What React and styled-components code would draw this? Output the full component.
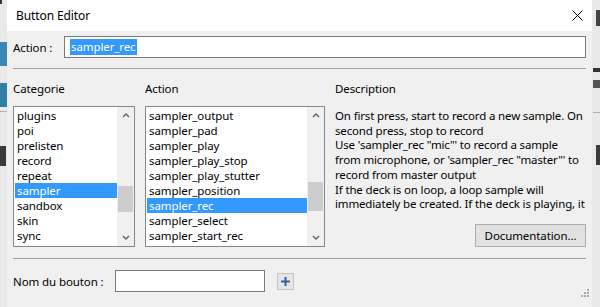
import React from 'react';
import styled, { createGlobalStyle } from 'styled-components';

const GlobalStyle = createGlobalStyle`
  html, body {
    margin: 0;
    padding: 0;
    background: #eaeaea;
  }
  body {
    font-family: "Noto Sans", "Open Sans", sans-serif;
    font-size: 11.5px;
    color: #000;
  }
`;

const Screen = styled.div`
  display: flex;
  width: 600px;
  height: 307px;
  overflow: hidden;
`;

const Strip = styled.div`
  width: ${p => p.$w}px;
  display: flex;
  flex-direction: column;
  align-items: ${p => (p.$right ? 'flex-end' : 'flex-start')};
  background: #e9e9e9;
`;

const Blob = styled.div`
  margin-top: ${p => p.$top}px;
  width: ${p => p.$w}px;
  height: ${p => p.$h}px;
  background: ${p => p.$c};
`;

const Dialog = styled.div`
  position: relative;
  width: 585px;
  display: flex;
  flex-direction: column;
  background: #f0f0f0;
`;

const TitleBar = styled.div`
  height: 31px;
  background: #fff;
  display: flex;
  align-items: center;
  justify-content: space-between;
  padding: 0 9px 0 9px;
  box-sizing: border-box;
`;

const Title = styled.span`
  font-size: 12px;
  letter-spacing: -0.1px;
`;

const Body = styled.div`
  padding: 0 6px;
  display: flex;
  flex-direction: column;
`;

const Row = styled.div`
  display: flex;
  align-items: center;
  margin-top: ${p => p.$top || 0}px;
`;

const Label = styled.span`
  width: ${p => p.$w}px;
  flex-shrink: 0;
  letter-spacing: -0.1px;
`;

const TextInput = styled.div`
  height: 22px;
  box-sizing: border-box;
  border: 1px solid #7a7a7a;
  background: #fff;
  width: ${p => (p.$w ? `${p.$w}px` : 'auto')};
  flex: ${p => (p.$w ? 'none' : '1')};
  display: flex;
  align-items: center;
  padding-left: 5px;
  letter-spacing: -0.1px;
`;

const Selected = styled.span`
  background: #3399ff;
  color: #fff;
  line-height: 16px;
  padding: 0 1px;
`;

const Separator = styled.div`
  height: 1px;
  background: #a0a0a0;
  margin-top: ${p => p.$top}px;
`;

const Columns = styled.div`
  display: grid;
  grid-template-columns: 122px 180px minmax(0, 1fr);
  column-gap: 10px;
  margin-top: 12px;
`;

const ColLabel = styled.div`
  line-height: 15px;
  height: 15px;
  margin-bottom: 10px;
  letter-spacing: -0.1px;
`;

const ListBox = styled.div`
  height: 141px;
  box-sizing: border-box;
  border: 1px solid #828790;
  background: #fff;
  display: flex;
`;

const Items = styled.div`
  flex: 1;
  padding: 1px 0 0 1px;
  overflow: hidden;
`;

const Item = styled.div`
  height: 15px;
  line-height: 15px;
  padding-left: 2px;
  white-space: nowrap;
  letter-spacing: -0.1px;
  background: ${p => (p.$active ? '#3399ff' : 'transparent')};
  color: ${p => (p.$active ? '#fff' : '#000')};
`;

const ScrollBar = styled.div`
  width: 17px;
  background: #f0f0f0;
  display: flex;
  flex-direction: column;
`;

const Arrow = styled.div`
  height: 17px;
  display: flex;
  align-items: center;
  justify-content: center;
`;

const Track = styled.div`
  flex: 1;
`;

const Thumb = styled.div`
  margin: ${p => p.$top}px 1px 0 1px;
  height: ${p => p.$h}px;
  background: #cdcdcd;
`;

const Description = styled.div`
  height: 141px;
  display: flex;
  flex-direction: column;
`;

const DescText = styled.div`
  margin-top: 3px;
  line-height: 14.7px;
  letter-spacing: -0.15px;
`;

const Line = styled.div`
  white-space: nowrap;
`;

const DocButton = styled.button`
  margin-top: auto;
  align-self: flex-end;
  width: 111px;
  height: 23px;
  border: 1px solid #adadad;
  background: #e1e1e1;
  font-family: inherit;
  font-size: 11.5px;
  letter-spacing: -0.1px;
  color: #000;
  padding: 0;
`;

const PlusButton = styled.div`
  width: 17px;
  height: 17px;
  box-sizing: border-box;
  margin-left: 12px;
  border: 1px solid #c4c4c4;
  background: #e5e5e5;
  display: flex;
  align-items: center;
  justify-content: center;
`;

const Grip = styled.svg`
  position: absolute;
  right: 3px;
  bottom: 10px;
`;

const Chevron = ({ down }) => (
  <svg width="8" height="5" viewBox="0 0 8 5">
    <polyline
      points={down ? '1,1 4,4 7,1' : '1,4 4,1 7,4'}
      fill="none"
      stroke="#606060"
      strokeWidth="1.4"
    />
  </svg>
);

const List = ({ items, active, thumbTop, thumbH }) => (
  <ListBox>
    <Items>
      {items.map(name => (
        <Item key={name} $active={name === active}>{name}</Item>
      ))}
    </Items>
    <ScrollBar>
      <Arrow><Chevron /></Arrow>
      <Track>
        <Thumb $top={thumbTop} $h={thumbH} />
      </Track>
      <Arrow><Chevron down /></Arrow>
    </ScrollBar>
  </ListBox>
);

const categories = ['plugins', 'poi', 'prelisten', 'record', 'repeat', 'sampler', 'sandbox', 'skin', 'sync'];
const actions = [
  'sampler_output',
  'sampler_pad',
  'sampler_play',
  'sampler_play_stop',
  'sampler_play_stutter',
  'sampler_position',
  'sampler_rec',
  'sampler_select',
  'sampler_start_rec',
];

const descLines = [
  'On first press, start to record a new sample. On',
  'second press, stop to record',
  'Use \'sampler_rec "mic"\' to record a sample',
  'from microphone, or \'sampler_rec "master"\' to',
  'record from master output',
  'If the deck is on loop, a loop sample will',
  'immediately be created. If the deck is playing, it',
];

export default function App() {
  return (
    <>
      <GlobalStyle />
      <Screen>
        <Strip $w={7}>
          <Blob $top={0} $w={2} $h={4} $c="#333" />
          <Blob $top={38} $w={7} $h={24} $c="#3a88b8" />
          <Blob $top={17} $w={7} $h={24} $c="#2f7fa8" />
          <Blob $top={4} $w={7} $h={1} $c="#b0b0b0" />
          <Blob $top={34} $w={6} $h={20} $c="#3a3a3a" />
        </Strip>
        <Dialog>
          <TitleBar>
            <Title>Button Editor</Title>
            <svg width="11" height="11" viewBox="0 0 11 11">
              <path d="M0.5 0.5 L10.5 10.5 M10.5 0.5 L0.5 10.5" stroke="#000" strokeWidth="1" />
            </svg>
          </TitleBar>
          <Body>
            <Row $top={5}>
              <Label $w={51}>Action :</Label>
              <TextInput>
                <Selected>sampler_rec</Selected>
              </TextInput>
            </Row>
            <Separator $top={10} />
            <Columns>
              <div>
                <ColLabel>Categorie</ColLabel>
                <List items={categories} active="sampler" thumbTop={62} thumbH={26} />
              </div>
              <div>
                <ColLabel>Action</ColLabel>
                <List items={actions} active="sampler_rec" thumbTop={58} thumbH={29} />
              </div>
              <div>
                <ColLabel>Description</ColLabel>
                <Description>
                  <DescText>
                    {descLines.map(l => (
                      <Line key={l}>{l}</Line>
                    ))}
                  </DescText>
                  <DocButton>Documentation...</DocButton>
                </Description>
              </div>
            </Columns>
            <Separator $top={11} />
            <Row $top={11}>
              <Label $w={102}>Nom du bouton :</Label>
              <TextInput $w={150} />
              <PlusButton>
                <svg width="9" height="9" viewBox="0 0 9 9">
                  <path d="M4.5 0 V9 M0 4.5 H9" stroke="#3b5f9e" strokeWidth="2" />
                </svg>
              </PlusButton>
            </Row>
          </Body>
          <Grip width="8" height="8" viewBox="0 0 8 8">
            <rect x="6" y="0" width="2" height="2" fill="#a8a8a8" />
            <rect x="3" y="3" width="2" height="2" fill="#a8a8a8" />
            <rect x="6" y="3" width="2" height="2" fill="#a8a8a8" />
            <rect x="0" y="6" width="2" height="2" fill="#a8a8a8" />
            <rect x="3" y="6" width="2" height="2" fill="#a8a8a8" />
            <rect x="6" y="6" width="2" height="2" fill="#a8a8a8" />
          </Grip>
        </Dialog>
        <Strip $w={8} $right>
          <Blob $top={10} $w={4} $h={16} $c="#444" />
          <Blob $top={42} $w={7} $h={4} $c="#333" />
          <Blob $top={8} $w={7} $h={8} $c="#555" />
          <Blob $top={24} $w={7} $h={1} $c="#b0b0b0" />
          <Blob $top={32} $w={4} $h={20} $c="#3a3a3a" />
        </Strip>
      </Screen>
    </>
  );
}
